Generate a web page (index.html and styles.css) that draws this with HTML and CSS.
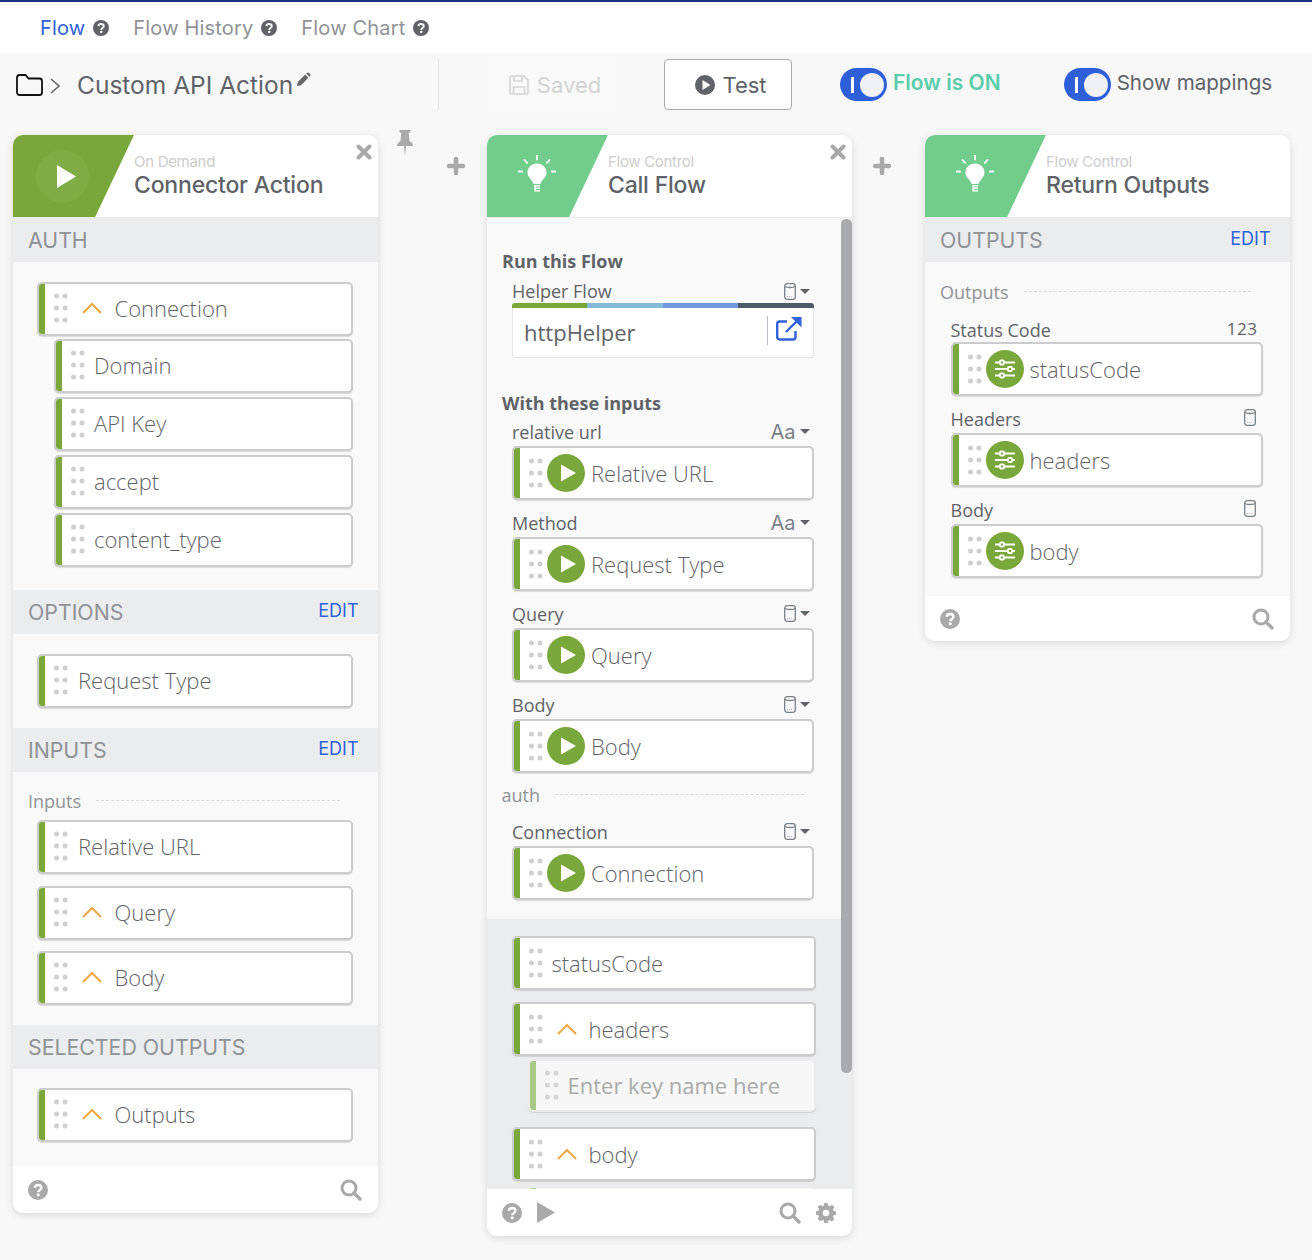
FILE: index.html
```html
<!DOCTYPE html>
<html lang="en">
<head>
    <meta charset="UTF-8">
    <title>Custom API Action</title>
    <link rel="stylesheet" href="styles.css">
</head>
<body>
    <svg class="defs" width="0" height="0">
        <symbol id="i-help" viewBox="0 0 20 20"><circle cx="10" cy="10" r="10" fill="currentColor"/><path d="M6.7 7.7C7 5.8 8.3 5 10.1 5c1.900 0 3.300 1.100 3.300 2.800 0 2.500-3.200 2.400-3.200 4.400" fill="none" stroke="#fff" stroke-width="2.400"/><rect x="8.800" y="13.500" width="2.800" height="2.700" rx=".5" fill="#fff"/></symbol>
        <symbol id="i-search" viewBox="0 0 22 22"><circle cx="9" cy="9" r="7" fill="none" stroke="currentColor" stroke-width="3"/><path d="M14 14l6 6" stroke="currentColor" stroke-width="3.400" stroke-linecap="round"/></symbol>
        <symbol id="i-dots" viewBox="0 0 14 30"><g fill="#cfcfcf"><circle cx="2.500" cy="3" r="2.500"/><circle cx="11" cy="3" r="2.500"/><circle cx="2.500" cy="15" r="2.500"/><circle cx="11" cy="15" r="2.500"/><circle cx="2.500" cy="27" r="2.500"/><circle cx="11" cy="27" r="2.500"/></g></symbol>
        <symbol id="i-chev" viewBox="0 0 20 12"><path d="M1 11l9-9 9 9" fill="none" stroke="#f0a94a" stroke-width="2.200"/></symbol>
        <symbol id="i-close" viewBox="0 0 16 16"><path d="M2.500 2.500l11 11M13.500 2.500l-11 11" stroke="currentColor" stroke-width="4" stroke-linecap="round"/></symbol>
        <symbol id="i-plus" viewBox="0 0 18 18"><path d="M9 2v14M2 9h14" stroke="currentColor" stroke-width="4.500" stroke-linecap="round"/></symbol>
        <symbol id="i-cyl" viewBox="0 0 12 17"><g fill="none" stroke="#7a8087" stroke-width="1.300"><rect x=".7" y=".7" width="10.600" height="15.600" rx="2.500"/><path d="M.7 3.500c2 1.300 8.600 1.300 10.600 0"/></g><path d="M3 13.500h6" stroke="#b9bcc0" stroke-dasharray="1 1"/></symbol>
        <symbol id="i-bulb" viewBox="0 0 38 38"><g fill="#fff"><path d="M19 8.500c-5.500 0-9.500 4-9.500 9 0 5 4.500 6.500 6 11.500h7c1.500-5 6-6.500 6-11.500 0-5-4-9-9.500-9z"/><path d="M16.300 30h5.800v1.500h-4.200v1h4.200v1.500h-4.200v1h4.200v1.500h-5.800z"/></g><path d="M19 .5v4M6.500 5l2.600 2.800M31.500 5l-2.600 2.800M.5 16.500h3.700M33.800 16.500h3.700" stroke="#fff" stroke-width="1.800" stroke-linecap="round"/></symbol>
        <symbol id="i-play-c" viewBox="0 0 38 38"><circle cx="19" cy="19" r="19" fill="#79a73b"/><path d="M14 10.500l15 8.500-15 8.500z" fill="#fff"/></symbol>
        <symbol id="i-sliders" viewBox="0 0 38 38"><circle cx="19" cy="19" r="19" fill="#79a73b"/><g fill="none" stroke="#fff" stroke-width="1.800"><path d="M9 12.500h5M18.500 12.500H29M9 19h13M26.500 19H29M9 25.500h5M18.500 25.500H29"/><rect x="14" y="10.500" width="4" height="4" rx="1"/><rect x="22" y="17" width="4" height="4" rx="1"/><rect x="14" y="23.500" width="4" height="4" rx="1"/></g></symbol>
    </svg>

    <nav class="tabs">
        <a class="tab tab-active">Flow <svg class="tab-help"><use href="#i-help"/></svg></a>
        <a class="tab">Flow History <svg class="tab-help"><use href="#i-help"/></svg></a>
        <a class="tab">Flow Chart <svg class="tab-help"><use href="#i-help"/></svg></a>
    </nav>

    <div class="toolbar">
        <div class="crumb">
            <svg class="folder" viewBox="0 0 27 22"><path d="M1 4c0-1.700 1-3 2.500-3h6l3 3.500h11c1.500 0 2.500 1 2.500 2.500v11.500c0 1.500-1 2.500-2.500 2.500h-20C2 21 1 20 1 18.500z" fill="none" stroke="#111" stroke-width="1.800"/></svg>
            <svg class="crumb-arrow" viewBox="0 0 10 16"><path d="M1 1l8 7-8 7" fill="none" stroke="#666" stroke-width="1.600"/></svg>
            <span class="flow-title">Custom API Action</span>
            <svg class="pencil" viewBox="0 0 14 14"><path d="M0 14l.8-4L8.200 2.600l3.200 3.200L4 13.200zM9.200 1.600l.6-.6c.7-.7 1.500-.7 2.200 0l1 1c.7.700.7 1.500 0 2.200l-.6.600z" fill="#666"/></svg>
        </div>
        <div class="saved-btn">
            <svg class="save-icon" viewBox="0 0 20 20"><g fill="none" stroke="#d3d3d3" stroke-width="1.600"><path d="M1 2.500C1 1.500 1.500 1 2.500 1H15l4 4v12.500c0 1-.5 1.500-1.500 1.500h-15c-1 0-1.500-.5-1.500-1.500z"/><path d="M5 1v5h8V1M4.500 19v-7h11v7"/></g></svg>
            Saved
        </div>
        <div class="test-btn">
            <svg class="test-icon" viewBox="0 0 20 20"><circle cx="10" cy="10" r="10" fill="#5f6368"/><path d="M7.500 5l8 5-8 5z" fill="#fff"/></svg>
            Test
        </div>
        <div class="switch switch-flow"><span class="switch-bar"></span><span class="switch-knob"></span></div>
        <span class="flow-on">Flow is ON</span>
        <div class="switch switch-map"><span class="switch-bar"></span><span class="switch-knob"></span></div>
        <span class="map-label">Show mappings</span>
    </div>

    <main class="canvas">
        <section class="card">
            <header class="card-head">
                <div class="banner banner-action">
                    <div class="banner-disc"><svg class="banner-play" viewBox="0 0 20 24"><path d="M0 0l20 12L0 24z" fill="#fff"/></svg></div>
                </div>
                <div class="head-text">
                    <div class="head-kind">On Demand</div>
                    <div class="head-name">Connector Action</div>
                </div>
                <svg class="card-close"><use href="#i-close"/></svg>
            </header>

            <div class="bar"><span>AUTH</span></div>
            <div class="panel panel-auth">
                <div class="pill"><svg class="dots"><use href="#i-dots"/></svg><svg class="chev"><use href="#i-chev"/></svg><span>Connection</span></div>
                <div class="pill pill-nested"><svg class="dots"><use href="#i-dots"/></svg><span class="pill-text">Domain</span></div>
                <div class="pill pill-nested"><svg class="dots"><use href="#i-dots"/></svg><span class="pill-text">API Key</span></div>
                <div class="pill pill-nested"><svg class="dots"><use href="#i-dots"/></svg><span class="pill-text">accept</span></div>
                <div class="pill pill-nested"><svg class="dots"><use href="#i-dots"/></svg><span class="pill-text">content_type</span></div>
            </div>

            <div class="bar"><span>OPTIONS</span><a class="edit">EDIT</a></div>
            <div class="panel panel-options">
                <div class="pill"><svg class="dots"><use href="#i-dots"/></svg><span class="pill-text">Request Type</span></div>
            </div>

            <div class="bar"><span>INPUTS</span><a class="edit">EDIT</a></div>
            <div class="panel panel-inputs">
                <div class="group-label group-inputs"><span>Inputs</span><i class="dash"></i></div>
                <div class="pill"><svg class="dots"><use href="#i-dots"/></svg><span class="pill-text">Relative URL</span></div>
                <div class="pill pill-gap"><svg class="dots"><use href="#i-dots"/></svg><svg class="chev"><use href="#i-chev"/></svg><span>Query</span></div>
                <div class="pill pill-gap"><svg class="dots"><use href="#i-dots"/></svg><svg class="chev"><use href="#i-chev"/></svg><span>Body</span></div>
            </div>

            <div class="bar"><span>SELECTED OUTPUTS</span></div>
            <div class="panel panel-selected">
                <div class="pill"><svg class="dots"><use href="#i-dots"/></svg><svg class="chev"><use href="#i-chev"/></svg><span>Outputs</span></div>
            </div>

            <footer class="card-foot">
                <svg class="foot-help"><use href="#i-help"/></svg>
                <span class="foot-space"></span>
                <svg class="foot-search"><use href="#i-search"/></svg>
            </footer>
        </section>

        <div class="gutter gutter-wide">
            <svg class="pin" viewBox="0 0 18 26"><path d="M3.500 0h11v2.500h-1.800l.8 8.500c2 1 3.500 2.700 3.500 5H10l-1 10-1-10H1c0-2.300 1.500-4 3.500-5l.8-8.500H3.500z" fill="#a9a9a9"/></svg>
            <svg class="plus"><use href="#i-plus"/></svg>
        </div>

        <section class="card">
            <header class="card-head">
                <div class="banner banner-control"><svg class="bulb"><use href="#i-bulb"/></svg></div>
                <div class="head-text">
                    <div class="head-kind">Flow Control</div>
                    <div class="head-name">Call Flow</div>
                </div>
                <svg class="card-close"><use href="#i-close"/></svg>
            </header>

            <div class="call-body">
                <div class="call-main">
                    <div class="heading heading-first">Run this Flow</div>
                    <div class="field-label label-helper"><span>Helper Flow</span><span class="type-drop"><svg class="cyl"><use href="#i-cyl"/></svg><i class="caret"></i></span></div>
                    <div class="picker">
                        <div class="picker-stripe"><i class="s1"></i><i class="s2"></i><i class="s3"></i><i class="s4"></i></div>
                        <div class="picker-box">
                            <span class="picker-name">httpHelper</span>
                            <i class="picker-sep"></i>
                            <svg class="ext-link" viewBox="0 0 26 24"><g fill="none" stroke="#2f62d8" stroke-width="2.400"><path d="M19.500 14v6c0 1.500-.8 2.500-2.500 2.500H3.500C2 22.500 1.200 21.500 1.200 20V7c0-1.500.8-2.500 2.300-2.500H11"/><path d="M10 15L23 2"/></g><path d="M15 0h10.500v10.500z" fill="#2f62d8"/></svg>
                        </div>
                    </div>
                    <div class="heading heading-inputs">With these inputs</div>
                    <div class="field-label"><span>relative url</span><span class="type-drop"><b class="aa">Aa</b><i class="caret"></i></span></div>
                    <div class="pill"><svg class="dots"><use href="#i-dots"/></svg><svg class="badge"><use href="#i-play-c"/></svg><span>Relative URL</span></div>
                    <div class="field-label"><span>Method</span><span class="type-drop"><b class="aa">Aa</b><i class="caret"></i></span></div>
                    <div class="pill"><svg class="dots"><use href="#i-dots"/></svg><svg class="badge"><use href="#i-play-c"/></svg><span>Request Type</span></div>
                    <div class="field-label"><span>Query</span><span class="type-drop"><svg class="cyl"><use href="#i-cyl"/></svg><i class="caret"></i></span></div>
                    <div class="pill"><svg class="dots"><use href="#i-dots"/></svg><svg class="badge"><use href="#i-play-c"/></svg><span>Query</span></div>
                    <div class="field-label"><span>Body</span><span class="type-drop"><svg class="cyl"><use href="#i-cyl"/></svg><i class="caret"></i></span></div>
                    <div class="pill"><svg class="dots"><use href="#i-dots"/></svg><svg class="badge"><use href="#i-play-c"/></svg><span>Body</span></div>
                    <div class="group-label group-auth"><span>auth</span><i class="dash"></i></div>
                    <div class="field-label label-conn"><span>Connection</span><span class="type-drop"><svg class="cyl"><use href="#i-cyl"/></svg><i class="caret"></i></span></div>
                    <div class="pill"><svg class="dots"><use href="#i-dots"/></svg><svg class="badge"><use href="#i-play-c"/></svg><span>Connection</span></div>
                </div>
                <div class="call-outputs">
                    <div class="pill"><svg class="dots"><use href="#i-dots"/></svg><span class="pill-text">statusCode</span></div>
                    <div class="pill pill-gap"><svg class="dots"><use href="#i-dots"/></svg><svg class="chev"><use href="#i-chev"/></svg><span>headers</span></div>
                    <div class="pill pill-nested pill-empty"><svg class="dots"><use href="#i-dots"/></svg><span class="pill-text">Enter key name here</span></div>
                    <div class="pill pill-next"><svg class="dots"><use href="#i-dots"/></svg><svg class="chev"><use href="#i-chev"/></svg><span>body</span></div>
                    <div class="pill pill-nested pill-empty"></div>
                </div>
                <div class="scroll-thumb"></div>
            </div>

            <footer class="card-foot">
                <svg class="foot-help"><use href="#i-help"/></svg>
                <svg class="foot-run" viewBox="0 0 20 22"><path d="M0 0l19 11L0 22z" fill="#a9a9a9"/></svg>
                <span class="foot-space"></span>
                <svg class="foot-search foot-search-gear"><use href="#i-search"/></svg>
                <svg class="foot-gear" viewBox="0 0 20 20"><path d="M8.300 0h3.400l.5 2.600 1.600.7 2.200-1.500 2.400 2.400-1.500 2.200.7 1.600 2.400.4v3.400l-2.400.5-.7 1.600 1.500 2.200-2.400 2.400-2.200-1.500-1.600.7-.5 2.300H8.300l-.5-2.400-1.600-.7L4 18.200l-2.400-2.400 1.500-2.200-.7-1.600L0 11.700V8.300l2.400-.4.700-1.600-1.500-2.200L4 1.700l2.200 1.500 1.600-.7zM10 6.700a3.300 3.300 0 100 6.600 3.300 3.300 0 000-6.600z" fill="#a9a9a9" fill-rule="evenodd"/></svg>
            </footer>
        </section>

        <div class="gutter gutter-narrow">
            <svg class="plus"><use href="#i-plus"/></svg>
        </div>

        <section class="card">
            <header class="card-head">
                <div class="banner banner-control"><svg class="bulb"><use href="#i-bulb"/></svg></div>
                <div class="head-text">
                    <div class="head-kind">Flow Control</div>
                    <div class="head-name">Return Outputs</div>
                </div>
            </header>

            <div class="bar"><span>OUTPUTS</span><a class="edit">EDIT</a></div>
            <div class="panel panel-outputs">
                <div class="group-label group-outputs"><span>Outputs</span><i class="dash"></i></div>
                <div class="field-label label-status"><span>Status Code</span><span class="type-num">123</span></div>
                <div class="pill"><svg class="dots"><use href="#i-dots"/></svg><svg class="badge"><use href="#i-sliders"/></svg><span>statusCode</span></div>
                <div class="field-label"><span>Headers</span><svg class="cyl cyl-solo"><use href="#i-cyl"/></svg></div>
                <div class="pill"><svg class="dots"><use href="#i-dots"/></svg><svg class="badge"><use href="#i-sliders"/></svg><span>headers</span></div>
                <div class="field-label"><span>Body</span><svg class="cyl cyl-solo"><use href="#i-cyl"/></svg></div>
                <div class="pill"><svg class="dots"><use href="#i-dots"/></svg><svg class="badge"><use href="#i-sliders"/></svg><span>body</span></div>
            </div>
            <footer class="card-foot card-foot-short">
                <svg class="foot-help"><use href="#i-help"/></svg>
                <span class="foot-space"></span>
                <svg class="foot-search"><use href="#i-search"/></svg>
            </footer>
        </section>
    </main>
</body>
</html>
```

FILE: styles.css
```css
* {
    box-sizing: border-box;
}
html, body {
    margin: 0;
    height: 1260px;
    overflow: hidden;
}
body {
    background-color: #f8f8f8;
    font-family: "Inter", "Liberation Sans", sans-serif;
    color: #5f6368;
}
.defs {
    position: absolute;
}

/* top tabs */
.tabs {
    display: flex;
    align-items: center;
    height: 53px;
    padding-left: 40px;
    gap: 24px;
    background: #fff;
    border-top: 2px solid #1c2f7c;
}
.tab {
    display: flex;
    align-items: center;
    gap: 8px;
    font-size: 20px;
    letter-spacing: 0.17px;
    color: #8f9296;
}
.tab-active {
    color: #2f62d8;
}
.tab-help {
    width: 16px;
    height: 16px;
    color: #5f6368;
}

/* toolbar */
.toolbar {
    display: flex;
    align-items: center;
    height: 63px;
}
.crumb {
    display: flex;
    align-items: center;
    width: 439px;
    height: 51px;
    padding-left: 16px;
    border-right: 1px solid #e2e2e2;
}
.folder {
    width: 27px;
    height: 22px;
}
.crumb-arrow {
    width: 10px;
    height: 16px;
    margin-left: 7px;
    margin-top: 2px;
}
.flow-title {
    margin-left: 17px;
    font-size: 24.500px;
    color: #5f6368;
}
.pencil {
    width: 14px;
    height: 14px;
    margin: 0 0 12px 4px;
}
.saved-btn {
    display: flex;
    align-items: center;
    justify-content: center;
    gap: 8px;
    width: 128px;
    height: 47px;
    margin-left: 49px;
    padding-left: 6px;
    border-radius: 4px;
    background: #f9f9f9;
    font-size: 22px;
    color: #d3d3d3;
}
.save-icon {
    width: 20px;
    height: 20px;
}
.test-btn {
    display: flex;
    align-items: center;
    justify-content: center;
    gap: 7px;
    width: 128px;
    height: 51px;
    margin-left: 48px;
    padding-left: 6px;
    background: #fff;
    border: 1px solid #aaa;
    border-radius: 4px;
    font-size: 22px;
    color: #5f6368;
}
.test-icon {
    width: 20px;
    height: 20px;
}
.switch {
    display: flex;
    align-items: center;
    justify-content: space-between;
    width: 47px;
    height: 33px;
    padding: 0 3px 0 11px;
    border-radius: 17px;
    background: #2f5fd8;
}
.switch-flow {
    margin-left: 48px;
}
.switch-map {
    margin-left: 63px;
}
.switch-bar {
    width: 3px;
    height: 16px;
    background: #fff;
}
.switch-knob {
    width: 24px;
    height: 24px;
    border-radius: 50%;
    background: #f0f1f5;
}
.flow-on {
    margin: 0 0 5px 6px;
    font-size: 21px;
    font-weight: 600;
    color: #5acdaa;
}
.map-label {
    margin: 0 0 5px 6px;
    font-size: 20.600px;
    color: #5f6368;
}

/* canvas and cards */
.canvas {
    display: flex;
    align-items: flex-start;
    padding: 14px 0 0 12.500px;
}
.card {
    position: relative;
    flex: none;
    width: 365px;
    margin-top: 5px;
    border-radius: 10px;
    background: #f9f9f9;
    box-shadow: 0 2px 8px rgba(0, 0, 0, 0.13);
    overflow: hidden;
}
.gutter {
    display: flex;
    align-items: flex-start;
    flex: none;
}
.gutter-wide {
    width: 109px;
}
.gutter-narrow {
    width: 73px;
}
.pin {
    width: 18px;
    height: 26px;
    margin-left: 18.500px;
}
.plus {
    width: 18px;
    height: 18px;
    margin: 27px 0 0 33px;
    color: #a9a9a9;
}
.gutter-narrow .plus {
    margin-left: 21px;
}
.card-head {
    display: flex;
    height: 83px;
    background: #fff;
    border-bottom: 1px solid #ececec;
}
.banner {
    position: relative;
    flex: none;
    width: 121.500px;
    height: 82px;
    clip-path: polygon(0 0, 100% 0, 68% 100%, 0 100%);
}
.banner-action {
    background: #79a73b;
}
.banner-control {
    background: #72cc8c;
}
.banner-disc {
    display: flex;
    align-items: center;
    justify-content: center;
    width: 53px;
    height: 53px;
    margin: 15px 0 0 23px;
    border-radius: 50%;
    background: rgba(255, 255, 255, 0.06);
}
.banner-play {
    width: 19px;
    height: 23px;
    margin-left: 8px;
}
.bulb {
    width: 38px;
    height: 38px;
    margin: 20px 0 0 31px;
}
.head-text {
    padding-top: 18px;
}
.head-kind {
    font-size: 15px;
    line-height: 18px;
    color: #cdcdcd;
    letter-spacing: -0.3px;
}
.head-name {
    font-size: 23px;
    line-height: 28px;
    font-weight: 500;
    color: #5f6368;
    letter-spacing: -0.2px;
}
.card-close {
    position: absolute;
    top: 9px;
    right: 5.500px;
    width: 16px;
    height: 16px;
    color: #a9a9a9;
}

/* section bars */
.bar {
    display: flex;
    justify-content: space-between;
    align-items: center;
    height: 44px;
    padding: 0 19px 0 15.500px;
    background: #ebecee;
    font-size: 21.300px;
    color: #8f9296;
}
.edit {
    margin-bottom: 4px;
    font-size: 18px;
    color: #2f62d8;
}
.panel-auth {
    padding: 20px 24.500px 23px 24px;
}
.panel-options {
    padding: 20px 24.500px 20px 24px;
}
.panel-inputs {
    padding: 19px 24.500px 20px 24px;
}
.panel-selected {
    padding: 19px 24.500px 24px 24px;
}
.panel-outputs {
    padding: 20px 27px 18px 26px;
}

/* pills */
.pill {
    display: flex;
    align-items: center;
    height: 54px;
    background: #fff;
    border: 2px solid #ccc;
    border-radius: 5px;
    box-shadow: 0 1px 1px rgba(0, 0, 0, 0.12);
    font-family: "Open Sans", "Liberation Sans", sans-serif;
    font-size: 22px;
    font-weight: 300;
    color: #5f6368;
    overflow: hidden;
}
.panel .pill {
    padding-bottom: 2px;
}
.panel-outputs .pill {
    padding-bottom: 0;
}
.call-outputs .pill {
    padding-bottom: 1px;
}
.pill::before {
    content: "";
    flex: none;
    align-self: stretch;
    width: 7px;
    margin-left: -1px;
    background: #79a73b;
}
.panel .pill::before,
.call-outputs .pill::before {
    margin-bottom: -2px;
}
.pill-nested {
    margin: 3px 0 0 17px;
}
.pill-nested + .pill-nested {
    margin-top: 4px;
}
.pill-gap {
    margin-top: 12px;
}
.pill-gap:last-child {
    margin-top: 11px;
}
.pill-next {
    margin-top: 15px;
}
.dots {
    flex: none;
    width: 14px;
    height: 30px;
    margin-left: 9px;
}
.pill-text {
    margin-left: 10.500px;
}
.pill-nested .pill-text {
    margin-left: 9.500px;
}
.chev {
    flex: none;
    width: 20px;
    height: 12px;
    margin: 0 13px 0 14px;
}
.badge {
    flex: none;
    width: 38px;
    height: 38px;
    margin: 0 6px 0 4px;
}
.pill-empty {
    height: 53px;
    border-color: #ebebeb;
    background: #f7f7f7;
    color: #a9a9a9;
    font-weight: 400;
}
.pill-empty::before {
    background: #a8c886;
}
.pill-empty .dots {
    opacity: 0.8;
}

/* labels */
.group-label {
    display: flex;
    align-items: center;
    height: 20px;
    margin-bottom: 9px;
    padding-bottom: 1px;
    font-family: "Open Sans", "Liberation Sans", sans-serif;
    font-size: 18px;
    color: #8f9296;
}
.group-inputs {
    margin-left: -8.500px;
    margin-right: 13px;
}
.group-outputs {
    margin-left: -10.500px;
    margin-right: 12px;
    margin-bottom: 0;
}
.group-auth {
    margin: 12px 10px 0 -10.500px;
}
.dash {
    flex: 1;
    margin-left: 15px;
    border-top: 1px dashed #dcdcdc;
}
.field-label {
    display: flex;
    justify-content: space-between;
    align-items: center;
    height: 27px;
    margin-top: 10px;
    padding-bottom: 2px;
    font-family: "Open Sans", "Liberation Sans", sans-serif;
    font-size: 18px;
    color: #5f6368;
}
.label-status {
    height: 26px;
    margin-top: 14px;
    padding: 2px 0 0;
}
.label-helper {
    height: 24px;
    margin-top: 6px;
    padding: 0;
}
.label-conn {
    margin-top: 14px;
}
.type-drop {
    display: flex;
    align-items: center;
    gap: 4px;
    margin-right: 4px;
}
.type-num {
    margin: 0 5px 4px 0;
    font-size: 17px;
    letter-spacing: 0.5px;
}
.cyl {
    width: 12px;
    height: 17px;
}
.cyl-solo {
    margin: 0 7px 2px 0;
}
.aa {
    font-family: "Inter", sans-serif;
    font-size: 20px;
    font-weight: 400;
    color: #7a8087;
}
.caret {
    width: 0;
    height: 0;
    border: 5px solid transparent;
    border-top: 5px solid #5f6368;
    border-bottom: 0;
}

/* call flow card */
.call-body {
    position: relative;
    height: 971px;
    overflow: hidden;
}
.call-main {
    height: 701px;
    padding: 31px 38px 0 25.500px;
}
.heading {
    height: 24px;
    margin-left: -10px;
    font-family: "Open Sans", "Liberation Sans", sans-serif;
    font-size: 18px;
    font-weight: 700;
    line-height: 24px;
    color: #5f6368;
}
.heading-inputs {
    margin-top: 33px;
    margin-bottom: -6px;
}
.picker-stripe {
    display: flex;
    height: 5px;
    border-radius: 3px 3px 0 0;
    overflow: hidden;
}
.picker-stripe i {
    flex: 1;
}
.s1 {
    background: #79a73b;
}
.s2 {
    background: #84bbd9;
}
.s3 {
    background: #7597dc;
}
.s4 {
    background: #4d5b6b;
}
.picker-box {
    display: flex;
    align-items: center;
    height: 50px;
    padding: 0 11px 0 11px;
    background: #fff;
    border: 1px solid #e4e4e4;
    border-top: 0;
    border-radius: 0 0 3px 3px;
}
.picker-name {
    flex: 1;
    padding-bottom: 2px;
    font-family: "Open Sans", "Liberation Sans", sans-serif;
    font-size: 22px;
    color: #5f6368;
}
.picker-sep {
    width: 1px;
    height: 29px;
    margin: 0 8px 4px 0;
    background: #b9bcc0;
}
.ext-link {
    width: 26px;
    height: 24px;
    margin-bottom: 8px;
}
.call-outputs {
    height: 270px;
    padding: 17px 37px 0 25px;
    background: #ebecee;
}
.call-outputs .pill {
    width: 304px;
}
.call-outputs .pill-text {
    margin-left: 9px;
}
.call-outputs .chev {
    margin-right: 12px;
}
.call-outputs .pill-nested {
    width: 288px;
    margin-left: 16px;
}
.call-outputs .pill-nested:last-child {
    margin-top: 5px;
}
.scroll-thumb {
    position: absolute;
    top: 1px;
    right: 0;
    width: 11px;
    height: 854px;
    border-radius: 5px;
    background: #a9aaae;
}

/* card footer */
.card-foot {
    display: flex;
    align-items: center;
    height: 47px;
    padding: 0 16px 0 15px;
    background: #fff;
}
.card-foot-short {
    height: 45px;
}
.foot-help {
    width: 20px;
    height: 20px;
    color: #a9a9a9;
}
.foot-run {
    width: 19px;
    height: 21px;
    margin-left: 15px;
}
.foot-space {
    flex: 1;
}
.foot-search {
    width: 22px;
    height: 22px;
    color: #a9a9a9;
}
.foot-search-gear {
    margin-right: 15px;
}
.foot-gear {
    width: 20px;
    height: 20px;
}
```
